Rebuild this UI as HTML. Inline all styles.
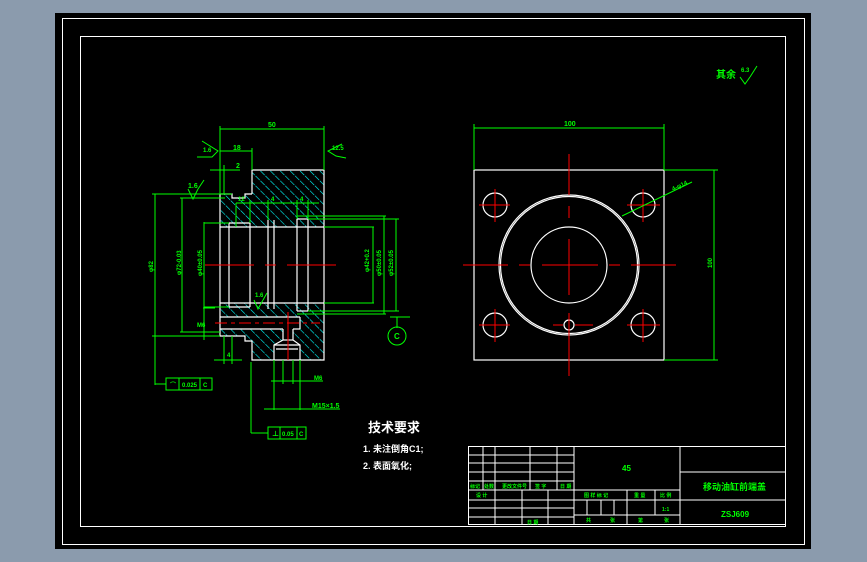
<!DOCTYPE html>
<html><head><meta charset="utf-8"><style>
html,body{margin:0;padding:0;background:#8b9bad;}
svg{display:block}
text{font-family:"Liberation Sans","Noto Sans CJK SC",sans-serif;}
</style></head><body>
<svg width="867" height="562" viewBox="0 0 867 562" xmlns="http://www.w3.org/2000/svg">
<defs>
<pattern id="h" patternUnits="userSpaceOnUse" width="7" height="7" patternTransform="rotate(-45)">
<rect width="7" height="7" fill="#000"/>
<line x1="0" y1="0" x2="0" y2="7" stroke="#00ffff" stroke-width="1.2" stroke-dasharray="3 1"/>
</pattern>
</defs>
<rect x="55" y="13" width="756" height="536" fill="#000"/>
<rect x="62.5" y="18.5" width="742" height="526" fill="none" stroke="#fff" stroke-width="1"/>
<rect x="80.5" y="36.5" width="705" height="490" fill="none" stroke="#fff" stroke-width="1"/>

<g>
<polygon points="252,170 324,170 324,360 252,360 252,341 245,341 245,336 220,336 220,194 252,194" fill="url(#h)"/>
<rect x="220" y="227" width="105" height="76" fill="#000"/>
<rect x="232" y="194" width="13" height="4" fill="#000"/>
<rect x="220" y="317" width="80" height="12" fill="#000"/>
<polygon points="283,329 293,329 293,340 300,345 300,360 274,360 274,345 283,340" fill="#000"/>
<g fill="none" stroke="#fff" stroke-width="1.2">
<polyline points="252,194 252,170 324,170 324,360 252,360 252,341 245,341 245,336 220,336 220,194 232,194 232,198 245,198 245,194 252,194"/>
<line x1="220" y1="227" x2="324" y2="227"/><line x1="220" y1="303" x2="324" y2="303"/>
<line x1="229" y1="223" x2="229" y2="307"/><line x1="250" y1="223" x2="250" y2="307"/>
<line x1="229" y1="223" x2="250" y2="223"/><line x1="229" y1="307" x2="250" y2="307"/>
<line x1="268" y1="220" x2="268" y2="309"/><line x1="274" y1="220" x2="274" y2="309"/>
<line x1="297" y1="219" x2="297" y2="311"/><line x1="308" y1="219" x2="308" y2="311"/>
<line x1="297" y1="219" x2="308" y2="219"/><line x1="297" y1="311" x2="308" y2="311"/>
<line x1="220" y1="317" x2="300" y2="317"/><line x1="220" y1="329" x2="283" y2="329"/>
<line x1="300" y1="317" x2="300" y2="329"/><line x1="293" y1="329" x2="300" y2="329"/>
<polyline points="283,329 283,340 274,345 274,360"/><polyline points="293,329 293,340 300,345 300,360"/>
<line x1="283" y1="340" x2="293" y2="340"/><line x1="274" y1="345" x2="300" y2="345"/>
<line x1="276" y1="349" x2="298" y2="349"/>
</g>
<g stroke="#f00" stroke-width="1">
<line x1="205" y1="265" x2="254" y2="265"/><line x1="265" y1="265" x2="276" y2="265"/><line x1="287" y1="265" x2="336" y2="265"/>
<line x1="215" y1="323" x2="320" y2="323" stroke-dasharray="12 4 4 4"/>
<line x1="288" y1="312" x2="288" y2="360"/>
</g>
<g fill="none" stroke="#0f0" stroke-width="1">
<line x1="220" y1="126" x2="220" y2="194"/><line x1="324" y1="126" x2="324" y2="170"/>
<line x1="220" y1="129" x2="324" y2="129"/>
<line x1="220" y1="151" x2="252" y2="151"/><line x1="252" y1="148" x2="252" y2="170"/>
<line x1="210" y1="170" x2="240" y2="170"/><line x1="224" y1="165" x2="224" y2="194"/>
<polyline points="202,141 218,151 212,157 197,157"/>
<polyline points="342,144 328,151 336,156 346,158"/>
<line x1="152" y1="194" x2="232" y2="194"/><line x1="180" y1="198" x2="225" y2="198"/>
<polyline points="188,189 193,199 198,189"/><line x1="198" y1="189" x2="204" y2="180"/>
<line x1="155" y1="194" x2="155" y2="385"/>
<line x1="152" y1="336" x2="220" y2="336"/>
<line x1="182" y1="198" x2="182" y2="332"/><line x1="180" y1="332" x2="220" y2="332"/>
<line x1="204" y1="223" x2="229" y2="223"/><line x1="204" y1="307" x2="229" y2="307"/>
<line x1="204" y1="222" x2="204" y2="340"/><line x1="203" y1="308" x2="215" y2="308"/>
<line x1="236" y1="203" x2="236" y2="227"/><line x1="236" y1="203" x2="250" y2="203"/><line x1="250" y1="200" x2="250" y2="223"/>
<line x1="240" y1="203" x2="319" y2="203"/>
<line x1="268" y1="200" x2="268" y2="220"/><line x1="297" y1="200" x2="297" y2="219"/><line x1="308" y1="200" x2="308" y2="219"/>
<line x1="308" y1="219" x2="399" y2="219"/><line x1="324" y1="227" x2="374" y2="227"/>
<line x1="324" y1="303" x2="374" y2="303"/><line x1="308" y1="311" x2="399" y2="311"/>
<line x1="297" y1="216" x2="386" y2="216"/><line x1="297" y1="314" x2="386" y2="314"/>
<line x1="373" y1="227" x2="373" y2="303"/><line x1="384" y1="216" x2="384" y2="314"/><line x1="396" y1="219" x2="396" y2="311"/>
<line x1="390" y1="317" x2="410" y2="317"/><line x1="397" y1="317" x2="397" y2="328"/>
<circle cx="397" cy="336" r="9"/>
<polyline points="254,300 258,309 263,300"/><line x1="263" y1="300" x2="267" y2="293"/>
<line x1="214" y1="360" x2="242" y2="360"/><line x1="224" y1="336" x2="224" y2="364"/><line x1="232" y1="336" x2="232" y2="364"/>
<line x1="274" y1="360" x2="274" y2="410"/><line x1="300" y1="360" x2="300" y2="410"/>
<line x1="283" y1="360" x2="283" y2="384"/><line x1="293" y1="360" x2="293" y2="384"/>
<line x1="271" y1="381" x2="323" y2="381"/><line x1="264" y1="409" x2="340" y2="409"/>
<line x1="251" y1="362" x2="251" y2="433"/><line x1="251" y1="433" x2="268" y2="433"/>
<line x1="155" y1="384" x2="166" y2="384"/>
<rect x="166" y="378" width="46" height="12"/><line x1="179" y1="378" x2="179" y2="390"/><line x1="200" y1="378" x2="200" y2="390"/>
<rect x="268" y="427" width="38" height="12"/><line x1="280" y1="427" x2="280" y2="439"/><line x1="297" y1="427" x2="297" y2="439"/>
</g>
<g fill="#0f0" font-size="7" font-weight="bold">
<text x="268" y="127">50</text>
<text x="233" y="150">18</text>
<text x="236" y="168">2</text>
<text x="188" y="188">1.6</text>
<text x="203" y="152" font-size="6">1.6</text>
<text x="332" y="150" font-size="6">12.5</text>
<text x="238" y="201" font-size="6">12</text>
<text x="271" y="201" font-size="6">4</text>
<text x="300" y="201" font-size="6">4</text>
<text x="255" y="297" font-size="6">1.6</text>
<text x="197" y="327" font-size="6">M6</text>
<text x="227" y="357" font-size="6">4</text>
<text x="314" y="380" font-size="6">M6</text>
<text x="312" y="408">M15×1.5</text>
<text x="170" y="387" font-size="6">⌒</text>
<text x="182" y="387" font-size="6">0.025</text>
<text x="203" y="387" font-size="6">C</text>
<text x="272" y="436" font-size="7">⊥</text>
<text x="282" y="436" font-size="6">0.05</text>
<text x="299" y="436" font-size="6">C</text>
<text x="394" y="339" font-size="8">C</text>
<text transform="translate(153,272) rotate(-90)" font-size="6">φ82</text>
<text transform="translate(181,275) rotate(-90)" font-size="6">φ72-0.03</text>
<text transform="translate(202,276) rotate(-90)" font-size="6">φ40±0.05</text>
<text transform="translate(369,272) rotate(-90)" font-size="6">φ42+0.2</text>
<text transform="translate(381,276) rotate(-90)" font-size="6">φ50±0.05</text>
<text transform="translate(393,276) rotate(-90)" font-size="6">φ52±0.05</text>
</g>
</g>

<g fill="none" stroke="#fff" stroke-width="1.2">
<rect x="474" y="170" width="190" height="190"/>
<circle cx="569" cy="265" r="70"/><circle cx="569" cy="265" r="68.5"/>
<circle cx="569" cy="265" r="38"/>
<circle cx="495" cy="205" r="12"/><circle cx="643" cy="205" r="12"/>
<circle cx="495" cy="325" r="12"/><circle cx="643" cy="325" r="12"/>
<circle cx="569" cy="325" r="5"/>
</g>
<g stroke="#f00" stroke-width="1">
<line x1="463" y1="265" x2="508" y2="265"/><line x1="519" y1="265" x2="530" y2="265"/><line x1="542" y1="265" x2="598" y2="265"/><line x1="609" y1="265" x2="620" y2="265"/><line x1="631" y1="265" x2="676" y2="265"/>
<line x1="569" y1="154" x2="569" y2="195"/><line x1="569" y1="206" x2="569" y2="218"/><line x1="569" y1="239" x2="569" y2="295"/><line x1="569" y1="313" x2="569" y2="376"/>
<line x1="479" y1="205" x2="510" y2="205"/><line x1="495" y1="189" x2="495" y2="222"/>
<line x1="627" y1="205" x2="660" y2="205"/><line x1="643" y1="189" x2="643" y2="222"/>
<line x1="479" y1="325" x2="510" y2="325"/><line x1="495" y1="309" x2="495" y2="342"/>
<line x1="627" y1="325" x2="660" y2="325"/><line x1="643" y1="309" x2="643" y2="342"/>
<line x1="553" y1="325" x2="563" y2="325"/><line x1="575" y1="325" x2="593" y2="325"/>
</g>
<g fill="none" stroke="#0f0" stroke-width="1">
<line x1="474" y1="124" x2="474" y2="170"/><line x1="664" y1="124" x2="664" y2="170"/>
<line x1="474" y1="128" x2="664" y2="128"/>
<line x1="664" y1="170" x2="718" y2="170"/><line x1="664" y1="360" x2="718" y2="360"/>
<line x1="714" y1="170" x2="714" y2="360"/>
<line x1="622" y1="216" x2="692" y2="182"/>
<polyline points="740,77 745,84 750,77"/><line x1="750" y1="77" x2="757" y2="66"/>
</g>
<g fill="#0f0" font-size="7" font-weight="bold">
<text x="564" y="126">100</text>
<text transform="translate(712,268) rotate(-90)" font-size="6">100</text>
<text transform="translate(673,191) rotate(-25)" font-size="6">4-φ14</text>
<text x="716" y="78" font-size="10">其余</text>
<text x="741" y="72" font-size="6">6.3</text>
</g>

<g fill="#fff" font-weight="bold">
<text x="368" y="432" font-size="13">技术要求</text>
<text x="363" y="452" font-size="9">1. 未注倒角C1;</text>
<text x="363" y="469" font-size="9">2. 表面氧化;</text>
</g>

<g fill="none" stroke="#fff" stroke-width="1">
<rect x="468.5" y="446.5" width="317" height="78"/>
<line x1="483" y1="446" x2="483" y2="490"/><line x1="495" y1="446" x2="495" y2="525"/>
<line x1="530" y1="446" x2="530" y2="490"/><line x1="557" y1="446" x2="557" y2="490"/>
<line x1="574" y1="446" x2="574" y2="525"/><line x1="680" y1="446" x2="680" y2="525"/>
<line x1="468" y1="455" x2="574" y2="455"/><line x1="468" y1="463" x2="574" y2="463"/>
<line x1="468" y1="472" x2="574" y2="472"/><line x1="468" y1="481" x2="574" y2="481"/>
<line x1="468" y1="490" x2="680" y2="490"/><line x1="468" y1="500" x2="574" y2="500"/>
<line x1="468" y1="508" x2="574" y2="508"/><line x1="468" y1="517" x2="574" y2="517"/>
<line x1="522" y1="490" x2="522" y2="525"/><line x1="548" y1="490" x2="548" y2="525"/>
<line x1="574" y1="500" x2="680" y2="500"/><line x1="574" y1="515" x2="680" y2="515"/>
<line x1="627" y1="490" x2="627" y2="525"/><line x1="655" y1="490" x2="655" y2="515"/>
<line x1="587" y1="500" x2="587" y2="515"/><line x1="601" y1="500" x2="601" y2="515"/><line x1="614" y1="500" x2="614" y2="515"/>
<line x1="680" y1="472" x2="786" y2="472"/><line x1="680" y1="500" x2="786" y2="500"/>
</g>
<g fill="#0f0" font-size="5" font-weight="bold">
<text x="470" y="488">标记</text><text x="484" y="488">处数</text><text x="502" y="488">更改文件号</text><text x="535" y="488">签 字</text><text x="560" y="488">日 期</text>
<text x="476" y="497">设 计</text><text x="527" y="524">日 期</text>
<text x="584" y="497">图 样 标 记</text><text x="634" y="497">重 量</text><text x="660" y="497">比 例</text>
<text x="662" y="511">1:1</text>
<text x="586" y="522">共</text><text x="610" y="522">张</text><text x="638" y="522">第</text><text x="664" y="522">张</text>
<text x="622" y="471" font-size="8">45</text>
<text x="703" y="490" font-size="9">移动油缸前端盖</text>
<text x="721" y="517" font-size="8">ZSJ609</text>
</g>
</svg>
</body></html>
